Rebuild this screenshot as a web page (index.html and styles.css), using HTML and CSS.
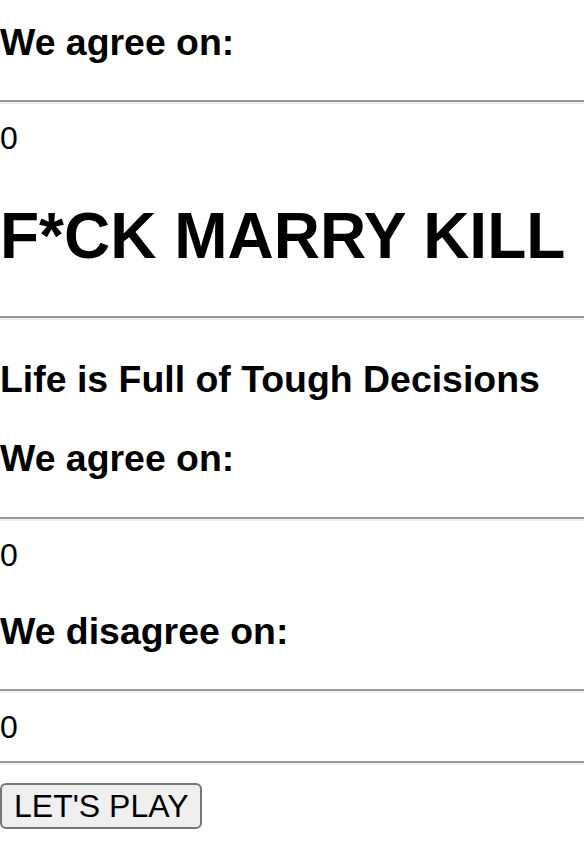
FILE: index.html
```html
<!DOCTYPE html>
<html>
<head>
<meta charset="utf-8">
<link rel="stylesheet" href="styles.css">
</head>
<body>
<h3 class="sub first">We agree on:</h3>
<hr class="rule">
<div class="count">0</div>
<h1 class="title">F*CK MARRY KILL</h1>
<hr class="rule">
<h3 class="sub">Life is Full of Tough Decisions</h3>
<h3 class="sub">We agree on:</h3>
<hr class="rule">
<div class="count">0</div>
<h3 class="sub">We disagree on:</h3>
<hr class="rule">
<div class="count">0</div>
<hr class="rule">
<button class="play">LET'S PLAY</button>
</body>
</html>
```

FILE: styles.css
```css
html, body {
  margin: 0;
  padding: 0;
  background: #fff;
}
body {
  font-family: "Liberation Sans", Arial, Helvetica, sans-serif;
  font-size: 32px;
  color: #000;
}
.sub {
  font-size: 37.44px;
  font-weight: bold;
  margin: 37.44px 0;
  line-height: 42px;
}
.sub.first {
  margin-top: 21px;
}
.title {
  font-size: 64px;
  font-weight: bold;
  margin: 42.88px 0;
  line-height: 74px;
}
.rule {
  margin: 16px 0;
  height: 0;
  border: none;
  border-top: 2px solid #9a9a9a;
  border-bottom: 2px solid #eeeeee;
}
.count {
  line-height: 36px;
}
.play {
  font-family: "Liberation Sans", Arial, Helvetica, sans-serif;
  font-size: 32px;
  color: #000;
  background: #efefef;
  border: 2px solid #767676;
  border-radius: 6px;
  padding: 0 12px;
  margin: 2px 0 0;
  height: 46px;
  line-height: 42px;
}
```
